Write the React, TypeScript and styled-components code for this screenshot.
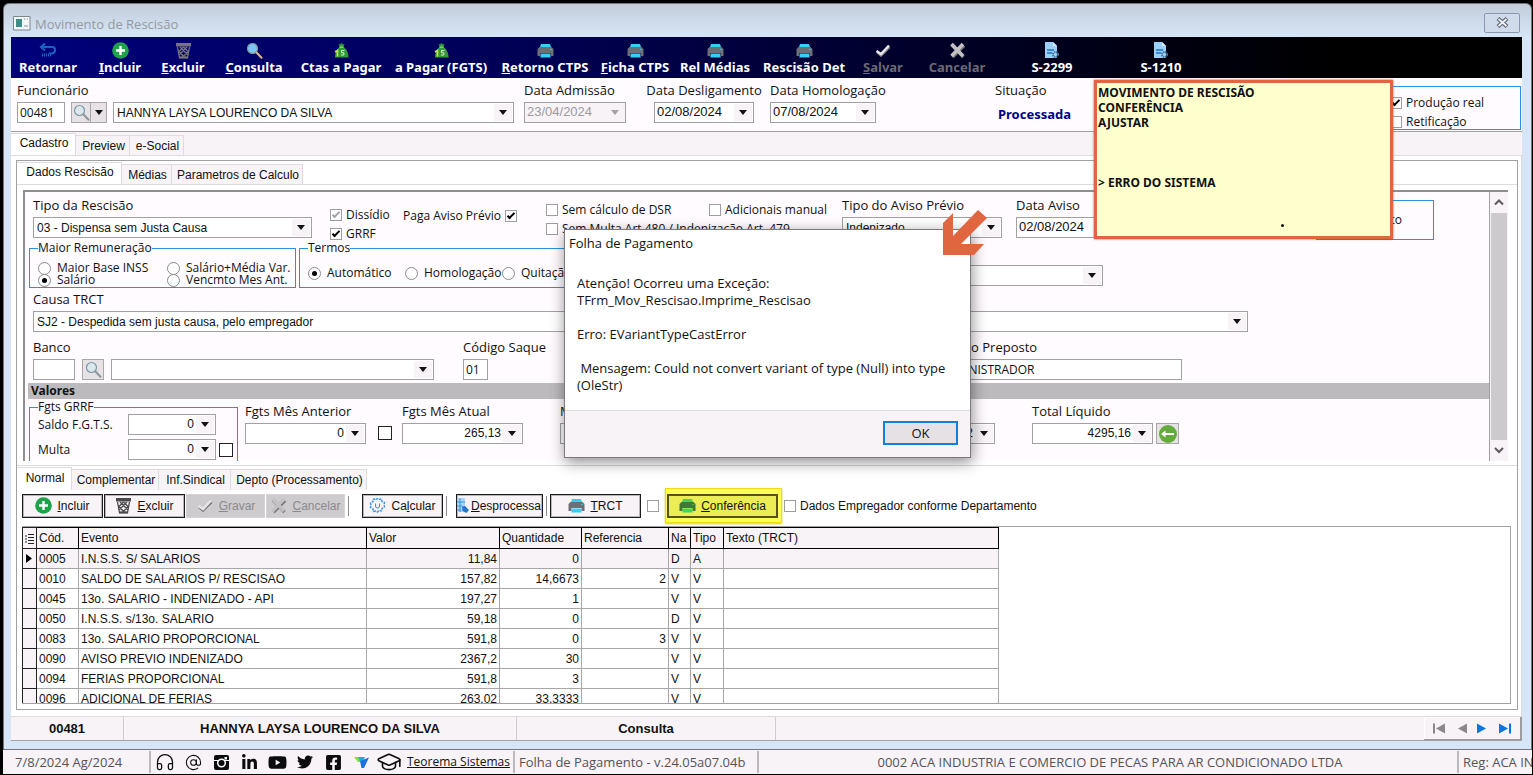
import React from "react";
import styled, { createGlobalStyle, css } from "styled-components";
import { FaTwitter, FaLinkedinIn, FaYoutube, FaFacebookSquare } from "react-icons/fa";
import { AtSign, GraduationCap, Headphones } from "lucide-react";

const ui = `"Open Sans", "Noto Sans", sans-serif`;
const bold = `"Noto Sans", "Open Sans", sans-serif`;
const sys = `"Liberation Sans", Arial, sans-serif`;

const c = {
  face: "#f7f3f7",
  panel: "#fffbff",
  line: "#a3a0a3",
  soft: "#dedbde",
  blue: "#2a90e4",
  frame: "#d6e6f6",
};

const Global = createGlobalStyle`
  *, *::before, *::after { box-sizing: border-box; }
  body { margin: 0; background: #000; color: #111; font: 12px/16px ${sys}; overflow: hidden; }
  button, input, select { font: inherit; color: inherit; margin: 0; padding: 0; border-radius: 0; }
  button { cursor: pointer; }
  svg { display: block; flex: none; }
`;

/* ---------- shell ---------- */
const Desktop = styled.div`
  display: flex;
  flex-direction: column;
  height: 100vh;
  padding: 3px 1px 1px 3px;
  background: #000;
`;
const Frame = styled.main`
  flex: 1;
  min-height: 0;
  display: flex;
  flex-direction: column;
  padding: 0 9px 8px 7px;
  border: 1px solid #77757b;
  border-radius: 6px 6px 0 0;
  background: linear-gradient(#c3cddb, ${c.frame} 33px);
`;
const TitleBar = styled.header`
  flex: none;
  display: flex;
  align-items: center;
  gap: 4px;
  height: 33px;
  padding: 6px 2px 0;
  color: #949aa2;
  font: 13px/18px ${ui};
`;
const CloseButton = styled.button`
  display: grid;
  place-items: center;
  width: 36px;
  height: 20px;
  margin: 0 0 2px auto;
  border: 1px solid #8b97b3;
  border-radius: 2px;
  background: #cfdaea;
`;
const Client = styled.div`
  flex: 1;
  min-height: 0;
  display: flex;
  flex-direction: column;
  background: ${c.face};
`;
const ToolBar = styled.nav`
  flex: none;
  display: grid;
  grid-template-columns: 74px 70px 56px 86px 88px 112px 96px 84px 76px 102px 56px 92px 98px 120px;
  height: 41px;
  background: linear-gradient(90deg, #00007b, #00005a 30%, #000032 55%, #000012 75%, #000 88%);
`;
const ToolButton = styled.button`
  display: flex;
  flex-direction: column;
  align-items: center;
  padding-top: 5px;
  border: 0;
  background: none;
  color: #fff;
  font: bold 13px/16px ${bold};
  white-space: nowrap;
  &:disabled { color: #6c6a70; }
`;

/* ---------- fields ---------- */
const FieldBox = styled.div<{ $w?: number; $center?: boolean }>`
  flex: none;
  display: flex;
  flex-direction: column;
  gap: 4px;
  width: ${(p) => (p.$w ? `${p.$w}px` : "auto")};
  align-items: ${(p) => (p.$center ? "center" : "flex-start")};
`;
const Label = styled.label`
  height: 16px;
  font: 13px/16px ${ui};
  white-space: nowrap;
`;
const FieldPair = styled.div<{ $gap: number }>`
  display: flex;
  align-items: flex-start;
  gap: ${(p) => p.$gap}px;
`;
const Controls = styled.div<{ $gap?: number }>`
  display: flex;
  align-items: center;
  gap: ${(p) => p.$gap ?? 6}px;
`;
const box = css`
  height: 21px;
  border: 1px solid ${c.line};
  background: #fff;
`;
const TextInput = styled.input<{ $w: number }>`
  ${box}
  width: ${(p) => p.$w}px;
  padding: 0 2px;
  outline: 0;
  font: 12px/16px ${ui};
`;
const Picker = styled.div<{ $w: number; $off?: boolean }>`
  ${box}
  flex: none;
  display: flex;
  width: ${(p) => p.$w}px;
  padding: 1px;
  background: ${(p) => (p.$off ? c.face : "#fff")};
  color: ${(p) => (p.$off ? "#9d9a9d" : "#111")};
`;
const PickerInput = styled.input<{ $right?: boolean }>`
  flex: 1;
  min-width: 0;
  border: 0;
  padding: 0 2px 1px 1px;
  outline: 0;
  background: none;
  text-align: ${(p) => (p.$right ? "right" : "left")};
  font: ${(p) => (p.$right ? 12 : 13)}px/16px ${sys};
`;
const CaretButton = styled.button`
  display: grid;
  place-items: center;
  width: 18px;
  border: 0;
  background: ${c.face};
`;
const SelectBox = styled.div<{ $w: number }>`
  ${box}
  flex: none;
  display: grid;
  grid-template-columns: 1fr 18px;
  align-items: stretch;
  width: ${(p) => p.$w}px;
  padding: 1px;
  & > select {
    grid-area: 1 / 1 / 2 / 3;
    min-width: 0;
    padding: 0 20px 0 2px;
    border: 0;
    outline: 0;
    appearance: none;
    background: none;
  }
  & > span {
    grid-area: 1 / 2;
    display: grid;
    place-items: center;
    background: ${c.face};
    pointer-events: none;
  }
`;
const IconButton = styled.button<{ $w?: number }>`
  display: flex;
  align-items: center;
  justify-content: center;
  width: ${(p) => p.$w ?? 22}px;
  height: 21px;
  border: 1px solid #aaa7aa;
  background: #e6e2e6;
`;
const SearchSplit = styled.div`
  display: flex;
  & > button + button { border-left-width: 0; }
`;
const Check = styled.label`
  flex: none;
  display: inline-flex;
  align-items: center;
  gap: 4px;
  height: 18px;
  white-space: nowrap;
  font: 12px/16px ${ui};
`;
const RadioLabel = styled(Check)<{ $tight?: boolean }>`
  gap: 6px;
  height: ${(p) => (p.$tight ? 12 : 18)}px;
  line-height: 12px;
`;
const SysText = styled.span`
  font: 12px/16px ${sys};
`;
const CheckInput = styled.input<{ $dark?: boolean; $gray?: boolean }>`
  flex: none;
  appearance: none;
  display: grid;
  place-items: center;
  width: ${(p) => (p.$dark ? 14 : 12)}px;
  height: ${(p) => (p.$dark ? 14 : 12)}px;
  border: 1px solid ${(p) => (p.$dark ? "#222" : "#a09da0")};
  background: #fff;
  &:checked::before {
    content: "";
    width: 8px;
    height: 4px;
    margin-bottom: 2px;
    border: solid ${(p) => (p.$gray ? "#a5a2a5" : "#000")};
    border-width: 0 0 2px 2px;
    rotate: -45deg;
  }
`;
const Radio = styled.input`
  flex: none;
  appearance: none;
  display: grid;
  place-items: center;
  width: 13px;
  height: 13px;
  border: 1px solid #8d8a8d;
  border-radius: 50%;
  background: #fff;
  &:checked::before { content: ""; width: 5px; height: 5px; border-radius: 50%; background: #000; }
`;
const Group = styled.fieldset<{ $w: number; $open?: boolean }>`
  flex: none;
  width: ${(p) => p.$w}px;
  min-width: 0;
  margin: 0;
  padding: 0 0 0 8px;
  border: 1px solid ${c.blue};
  border-bottom-width: ${(p) => (p.$open ? 0 : 1)}px;
  & > legend { height: 14px; padding: 0; font: 12px/14px ${ui}; }
`;

/* ---------- header panel ---------- */
const HeaderPanel = styled.section`
  flex: none;
  display: flex;
  align-items: flex-start;
  gap: 20px;
  height: 54px;
  padding: 4px 1px 0 6px;
  border-bottom: 1px solid ${c.line};
  background: ${c.panel};
`;
const Situation = styled(FieldBox)`
  margin-left: 89px;
  & > output { color: #000085; font: bold 13px/21px ${bold}; padding: 2px 3px; }
`;
const RealBox = styled.div`
  display: flex;
  flex-direction: column;
  align-items: flex-end;
  width: 300px;
  height: 44px;
  margin: 4px 0 0 auto;
  padding: 6px 36px 0 0;
  border: 1px solid ${c.blue};
  & > label { width: 94px; height: 19px; }
`;

/* ---------- tabs ---------- */
const Tabs = styled.div<{ $h: number; $bg?: string }>`
  flex: none;
  display: flex;
  align-items: flex-end;
  height: ${(p) => p.$h}px;
  background: ${(p) => p.$bg ?? "#fff"};
`;
const Tab = styled.button<{ $w: number; $on?: boolean }>`
  width: ${(p) => p.$w}px;
  height: ${(p) => (p.$on ? "calc(100% - 1px)" : "calc(100% - 3px)")};
  padding-left: 2px;
  padding-bottom: ${(p) => (p.$on ? 3 : 0)}px;
  border: solid ${c.soft};
  border-width: 1px 1px 0 0;
  background: ${(p) => (p.$on ? "#fff" : c.face)};
  white-space: nowrap;
`;
const OuterPage = styled.section`
  flex: 1;
  min-height: 0;
  display: flex;
  padding: 4px 3px 6px 5px;
  border: solid ${c.soft};
  border-width: 1px 1px 0 0;
  background: #fff;
`;
const InnerPage = styled.div`
  flex: 1;
  min-width: 0;
  display: flex;
  flex-direction: column;
  border: 1px solid ${c.line};
  background: #fff;
`;
const DataPage = styled.div`
  flex: none;
  padding: 5px 9px 4px 6px;
  border: solid ${c.soft};
  border-width: 1px 0;
`;
const ScrollPanel = styled.div`
  display: flex;
  height: 271px;
  border: solid #918e91;
  border-width: 2px 0 0 2px;
  background: ${c.panel};
`;
const Form = styled.form`
  flex: 1;
  min-width: 0;
  display: flex;
  flex-direction: column;
  overflow: hidden;
  padding-left: 3px;
`;
const ScrollBar = styled.div`
  display: flex;
  flex-direction: column;
  width: 19px;
  border-left: 1px solid ${c.line};
  background: ${c.face};
  & > i { flex: 1; margin: 0 1px; background: #cdcacd; }
`;
const ScrollArrow = styled.button`
  display: grid;
  place-items: center;
  height: 21px;
  border: 0;
  background: none;
`;
const FormRow = styled.div<{ $h: number; $left?: number; $top?: number; $gap?: number }>`
  flex: none;
  display: flex;
  align-items: flex-start;
  gap: ${(p) => p.$gap ?? 0}px;
  height: ${(p) => p.$h}px;
  padding: ${(p) => p.$top ?? 0}px 0 0 ${(p) => p.$left ?? 5}px;
`;
const Stack = styled.div<{ $w: number; $top?: number }>`
  flex: none;
  display: flex;
  flex-direction: column;
  gap: 1px;
  width: ${(p) => p.$w}px;
  padding-top: ${(p) => p.$top ?? 0}px;
`;
const MomentBox = styled.div`
  width: 118px;
  height: 40px;
  margin-left: 201px;
  margin-top: 3px;
  padding: 11px 31px 0 0;
  border: 1px solid ${c.blue};
  text-align: right;
  font: 12px/16px ${ui};
`;
const RadioGrid = styled.div`
  display: grid;
  grid-template-columns: 129px auto;
  padding: 7px 0 1px;
`;
const RadioLine = styled.div`
  display: grid;
  grid-template-columns: 97px 97px auto;
  padding: 9px 0 5px;
`;
const SectionBar = styled.h2`
  flex: none;
  height: 16px;
  margin: 0;
  padding-left: 3px;
  background: #bdbabd;
  font: bold 12px/16px ${bold};
`;
const GrrfGrid = styled.div`
  display: grid;
  grid-template-columns: 87px 88px 14px;
  gap: 4px 3px;
  align-items: center;
  padding-bottom: 2px;
  font: 12px/16px ${ui};
`;
const CheckSlot = styled.div`
  padding: 23px 10px 0 12px;
`;
const WideGap = styled.span`
  width: 193px;
`;

/* ---------- lower page ---------- */
const ActionBar = styled.div`
  flex: none;
  display: flex;
  align-items: center;
  gap: 1px;
  height: 36px;
  padding: 0 0 5px 5px;
`;
const Action = styled.button<{ $w: number; $tight?: boolean }>`
  flex: none;
  display: flex;
  align-items: center;
  justify-content: ${(p) => (p.$tight ? "flex-start" : "center")};
  gap: ${(p) => (p.$tight ? 2 : 5)}px;
  width: ${(p) => p.$w}px;
  height: 24px;
  overflow: hidden;
  border: 1px solid #1c1a1c;
  box-shadow: inset 0 0 0 1px #b9b6b9;
  background: ${c.face};
  white-space: nowrap;
  &:disabled { border-color: #d6d3d6; box-shadow: none; background: #cecbce; color: #8d8a8d; }
`;
const Sep = styled.span<{ $after: number }>`
  width: 1px;
  height: 20px;
  margin: 0 ${(p) => p.$after}px 0 2px;
  background: #8d8a8d;
`;
const PrintOptions = styled.div`
  display: flex;
  align-items: center;
  gap: 6px;
  padding: 0 1px 0 5px;
`;
const Marker = styled.div`
  display: flex;
  align-items: center;
  height: 35px;
  padding: 0 3px 0 1px;
  border: 1px solid #f5d816;
  background: #ffff55;
  box-shadow: 0 1px 2px #d8c84a;
  & > button { background: #ecec55; border: 2px solid #55521c; box-shadow: none; }
`;
const GridArea = styled.div`
  flex: 1;
  min-height: 0;
  overflow: hidden;
  margin: 0 6px 5px 5px;
  border: solid ${c.line};
  border-width: 1px 1px 1px 0;
  background: #fff;
`;
const Grid = styled.table`
  width: 976px;
  table-layout: fixed;
  border-collapse: collapse;
  th, td { height: 20px; padding: 0 2px; border: 1px solid #a9a6a9; line-height: 16px; overflow: hidden; white-space: nowrap; }
  th { height: 21px; border-color: #000; background: ${c.face}; text-align: left; font-weight: normal; }
  th:first-child, td:first-child { padding: 0 0 0 2px; border-color: #222; background: ${c.face}; }
`;
const Row = styled.tr<{ $on?: boolean }>`
  background: ${(p) => (p.$on ? c.face : "#fff")};
`;
const Cell = styled.td<{ $num?: boolean }>`
  text-align: ${(p) => (p.$num ? "right" : "left")};
`;
const RecordBar = styled.footer`
  flex: none;
  display: grid;
  grid-template-columns: 113px 393px 259px 1fr 98px;
  height: 25px;
  border: solid ${c.line};
  border-width: 1px 0;
  border-top-color: ${c.soft};
  & > output { border-right: 1px solid #cfcccf; text-align: center; font: bold 13px/23px ${sys}; }
`;
const Navigator = styled.div`
  display: flex;
  justify-content: space-between;
  align-items: center;
  padding: 0 9px;
  border: solid #9e9b9e;
  border-width: 0 2px 1px 0;
  box-shadow: inset 1px 1px #fff;
  & > button { border: 0; background: none; }
`;

/* ---------- application status bar ---------- */
const AppBar = styled.footer`
  flex: none;
  display: flex;
  align-items: center;
  height: 24px;
  overflow: hidden;
  background: ${c.face};
  color: #555258;
  font: 13px/22px ${ui};
  white-space: nowrap;
`;
const AppCell = styled.div<{ $w?: number; $mid?: boolean; $flush?: boolean }>`
  flex: ${(p) => (p.$w ? `0 0 ${p.$w}px` : 1)};
  min-width: 0;
  display: flex;
  align-items: center;
  justify-content: ${(p) => (p.$mid ? "center" : "flex-start")};
  height: 22px;
  padding-left: ${(p) => (p.$flush ? 0 : 4)}px;
  border-right: 2px solid #bdbabd;
  &:first-child { padding-left: 12px; }
  &:last-child { border: 0; overflow: hidden; }
`;
const Social = styled.a`
  flex: none;
  display: grid;
  place-items: center;
  width: 28px;
  color: #0c0b0d;
`;
const BrandLink = styled.a`
  margin-left: 4px;
  color: #111;
  font: 12px/18px ${ui};
`;

/* ---------- overlays ---------- */
const Dialog = styled.section`
  position: absolute;
  left: 564px;
  top: 229px;
  width: 407px;
  border: 1px solid #7c797d;
  background: #fff;
  box-shadow: 1px 4px 14px rgba(0, 0, 0, 0.45);
  & > h1 { margin: 0; padding: 4px 4px 0; font: 13px/18px ${ui}; }
  & > p { margin: 0; height: 158px; padding: 23px 12px 0; font: 13px/17px ${ui}; white-space: pre-line; }
  & > footer { display: flex; justify-content: flex-end; height: 47px; padding: 10px 12px; border-top: 1px solid ${c.soft}; background: ${c.face}; }
`;
const OkButton = styled.button`
  width: 75px;
  height: 24px;
  border: 2px solid #1080dc;
  background: #e5e1e5;
  font: 13px/16px ${ui};
`;
const Note = styled.aside`
  position: absolute;
  left: 1094px;
  top: 80px;
  width: 299px;
  height: 159px;
  padding: 2px 1px;
  border: 3px solid #e06640;
  background: #ffffce;
  box-shadow: 0 0 2px #a04a30;
  font: bold 12px/15px ${bold};
  white-space: pre-line;
`;
const Speck = styled.i`
  position: absolute;
  left: 184px;
  top: 141px;
  width: 3px;
  height: 3px;
  border-radius: 50%;
  background: #111;
`;
const Arrow = styled.svg`
  position: absolute;
  left: 942px;
  top: 209px;
`;

/* ---------- drawings ---------- */
const Caret = ({ color = "#111" }: { color?: string }) => (
  <svg width="8" height="5" viewBox="0 0 8 5"><path d="M0 0h8L4 5z" fill={color} /></svg>
);
const PlusIcon = ({ size = 17 }: { size?: number }) => (
  <svg width={size} height={size} viewBox="0 0 17 17">
    <circle cx="8.500" cy="8.500" r="8.300" fill="#1fa34a" />
    <path d="M8.500 4v9M4 8.500h9" stroke="#fff" strokeWidth="2.400" />
  </svg>
);
const ReturnIcon = () => (
  <svg width="18" height="17" viewBox="0 0 18 17" fill="none" stroke="#1764bd" strokeWidth="2">
    <path d="M6 1.500L2 5l4 3.500M2.500 5h11q2.500 0 2.500 3t-3 3.500H10" />
    <path d="M3 13h9" strokeWidth="3" strokeDasharray="1 1" />
  </svg>
);
const BinIcon = ({ color = "#77757a" }: { color?: string }) => (
  <svg width="17" height="17" viewBox="0 0 17 17" fill="none" stroke={color} strokeWidth="1.300">
    <path d="M1 1h15v3.500H1z" fill={color} stroke="none" />
    <path d="M2.500 5l2 10.500h8l2-10.500M5 5l7.500 7.500M12 5l-7.500 7.500M8.500 5L4 9.500l5 5.500M8.500 5L13 9.500 8 15" />
    <path d="M4 14.500h9v2H4z" fill={color} stroke="none" />
  </svg>
);
const LensIcon = ({ fill = "#7cc4f2", handle = "#d9b98c" }: { fill?: string; handle?: string }) => (
  <svg width="17" height="17" viewBox="0 0 17 17">
    <circle cx="6.500" cy="6.500" r="5" fill={fill} stroke="#7f98a4" strokeWidth="1.200" />
    <path d="M10.500 10.500l5 5.200" stroke={handle} strokeWidth="2" strokeLinecap="round" />
  </svg>
);
const MoneyIcon = () => (
  <svg width="15" height="17" viewBox="0 0 15 17">
    <path d="M4.500 2l1.500.5L7.500 1 9 2.500l1.500-.5L9.500 5C12.500 6.500 14.500 11 14.500 15.500H1C1 11 3 6.500 5.700 5z" fill="#2f9c3c" />
    <path d="M5.500 5.200h4" stroke="#b6e07a" />
    <path d="M1 10l2.500-1.500v6" stroke="#e8d839" strokeWidth="1.600" fill="none" />
    <path d="M10.500 8.500h-3v2.200h2.300v2.300H7" stroke="#d6f0c6" fill="none" />
  </svg>
);
const PrinterIcon = ({ body = "#6c7076", paper = "#38cdf2" }: { body?: string; paper?: string }) => (
  <svg width="17" height="17" viewBox="0 0 17 17">
    <path d="M4 2h9l1 3H3z" fill={paper} />
    <path d="M2.500 5h12l2 2v7h-3v-3h-10v3h-3V7z" fill={body} />
    <path d="M4 11.500h9l.7 4H3.300z" fill={paper} />
    <circle cx="14" cy="7.500" r=".8" fill={paper} />
  </svg>
);
const CheckIcon = () => (
  <svg width="18" height="17" viewBox="0 0 18 17" fill="none">
    <path d="M3 10l4 3.500L15.500 5" stroke="#7a787c" strokeWidth="2.500" />
    <path d="M2.500 9l4.500 3L15 3.500" stroke="#e8e5e8" strokeWidth="2.500" />
  </svg>
);
const CrossIcon = () => (
  <svg width="17" height="17" viewBox="0 0 17 17" fill="none" strokeWidth="3.500">
    <path d="M3 3l11.500 12M15 3.500L3.500 15" stroke="#77757a" />
    <path d="M2.500 2l11.500 12M14 2L2.500 14" stroke="#c4c1c4" />
  </svg>
);
const SheetIcon = () => (
  <svg width="16" height="17" viewBox="0 0 16 17">
    <path d="M1 0h8l4 4v12H1z" fill="#9bd0fa" />
    <path d="M9 0l4 4H9z" fill="#d9effe" />
    <path d="M3 8h7M3 11h5" stroke="#1c73c4" strokeWidth="1.500" />
    <circle cx="11.500" cy="12.500" r="2.500" fill="none" stroke="#47728f" strokeWidth="2" strokeDasharray="1.400 .6" />
  </svg>
);
const GearIcon = () => (
  <svg width="17" height="17" viewBox="0 0 17 17" fill="none" stroke="#2f96e4">
    <path d="M7 2.500l1.500-1 1.500 1 2.500-.5.5 2.500 2.500 1-.5 2.500.5 2-2.500 1.500-.5 2.500-2.500-.5-1.500 1.500L7 14l-2.500.5L4 12l-2.500-1.500L2 8 1.500 6 4 4.500 4.500 2z" strokeDasharray="2.500 1" strokeWidth="1.400" />
    <path d="M6.500 6.500v2.500a2 2 0 0 0 4 0V6.500" />
  </svg>
);
const SheetUndoIcon = () => (
  <svg width="12" height="17" viewBox="0 0 12 17">
    <path d="M0 1h8v8H6v6H0z" fill="#a9d5f7" />
    <path d="M0 5h8M0 9h5M0 13h4M3 1v14" stroke="#3c93da" />
    <path d="M5 9.500l3-.5 4 4-2.500 3-4-2z" fill="#2379c7" />
  </svg>
);
const BackIcon = () => (
  <svg width="18" height="18" viewBox="0 0 18 18">
    <circle cx="9" cy="9" r="9" fill="#63ac3c" />
    <path d="M2 9l4.500-3.500V8H15v2H6.500v2.500z" fill="#fff" />
  </svg>
);
const Chevron = ({ up }: { up?: boolean }) => (
  <svg width="10" height="7" viewBox="0 0 10 7" fill="none" stroke="#5c5a5c" strokeWidth="2">
    <path d={up ? "M1 5.500l4-4 4 4" : "M1 1l4 4 4-4"} />
  </svg>
);
const NavIcon = ({ back, end, color }: { back?: boolean; end?: boolean; color: string }) => (
  <svg width="13" height="11" viewBox="0 0 13 11" fill={color}>
    <path d={back ? "M12 0.500v10L3 5.500z" : "M1 0.500v10l9-5z"} />
    {end && <rect x={back ? 0 : 11} y="0.500" width="2" height="10" />}
  </svg>
);
const CameraIcon = () => (
  <svg width="17" height="17" viewBox="0 0 17 17" fill="none">
    <rect x="1" y="1" width="15" height="15" rx="2" fill="#0c0b0d" />
    <circle cx="8.500" cy="9" r="3.800" stroke="#fff" strokeWidth="1.500" />
    <rect x="11.500" y="3" width="2.500" height="2.500" fill="#fff" />
    <path d="M1 6.500h4M12 6.500h4" stroke="#fff" />
  </svg>
);
const BrandIcon = () => (
  <svg width="15" height="12" viewBox="0 0 15 12">
    <path d="M0 1h8L6.500 6H4z" fill="#8ae02a" />
    <path d="M4 1h7l-2 4H6z" fill="#16b4d8" />
    <path d="M6 5l9-3.500-5 10.500H7.500z" fill="#1c6fdc" />
  </svg>
);
const WindowIcon = () => (
  <svg width="18" height="15" viewBox="0 0 18 15">
    <path d="M.5.5h16.500v13.500H.5z" fill="#f4f6f8" stroke="#7d868f" />
    <path d="M3 3h6v8H3z" fill="#3c8f87" />
    <path d="M11 3h1.500M14 3h1M11 10h4" stroke="#8a9299" />
  </svg>
);
const CloseIcon = () => (
  <svg width="13" height="11" viewBox="0 0 13 11" fill="none">
    <path d="M2 1.500l9 8M11 1.500l-9 8" stroke="#5a616e" strokeWidth="4" />
    <path d="M2.500 2l8 7M10.500 2l-8 7" stroke="#eef1f6" strokeWidth="1.800" />
  </svg>
);

/* ---------- small pieces ---------- */
const Hot = ({ text }: { text: string }) => {
  const at = text.indexOf("&");
  if (at < 0) return <span>{text}</span>;
  return <span>{text.slice(0, at)}<u>{text[at + 1]}</u>{text.slice(at + 2)}</span>;
};
const Drop = ({ id, w, value, right, off, name }: { id?: string; w: number; value: string; right?: boolean; off?: boolean; name?: string }) => (
  <Picker $w={w} $off={off}>
    <PickerInput id={id} aria-label={name} defaultValue={value} $right={right} disabled={off} />
    <CaretButton type="button" aria-label="Abrir" disabled={off}><Caret color={off ? "#a5a2a5" : "#111"} /></CaretButton>
  </Picker>
);
const Choice = ({ id, w, value, name }: { id?: string; w: number; value: string; name?: string }) => (
  <SelectBox $w={w}>
    <select id={id} aria-label={name}><option>{value}</option></select>
    <span><Caret /></span>
  </SelectBox>
);
const Field = ({ id, label, w, center, children }: { id: string; label: string; w?: number; center?: boolean; children: React.ReactNode }) => (
  <FieldBox $w={w} $center={center}><Label htmlFor={id}>{label}</Label>{children}</FieldBox>
);
const Tick = ({ label, on, gray }: { label: string; on?: boolean; gray?: boolean }) => (
  <Check><CheckInput type="checkbox" defaultChecked={on} $gray={gray} />{label}</Check>
);
const Option = ({ group, label, on, tight }: { group: string; label: string; on?: boolean; tight?: boolean }) => (
  <RadioLabel $tight={tight}><Radio type="radio" name={group} defaultChecked={on} />{label}</RadioLabel>
);

const tools: [string, React.ReactNode, boolean?][] = [
  ["Retornar", <ReturnIcon />],
  ["&Incluir", <PlusIcon />],
  ["&Excluir", <BinIcon />],
  ["&Consulta", <LensIcon />],
  ["Ctas a Pagar", <MoneyIcon />],
  ["a Pagar (FGTS)", <MoneyIcon />],
  ["&Retorno CTPS", <PrinterIcon />],
  ["&Ficha CTPS", <PrinterIcon />],
  ["Rel Médias", <PrinterIcon />],
  ["Rescisão Det", <PrinterIcon />],
  ["&Salvar", <CheckIcon />, true],
  ["Cancelar", <CrossIcon />, true],
  ["S-2299", <SheetIcon />],
  ["S-1210", <SheetIcon />],
];

const events = [
  ["0005", "I.N.S.S. S/ SALARIOS", "11,84", "0", "", "D", "A"],
  ["0010", "SALDO DE SALARIOS P/ RESCISAO", "157,82", "14,6673", "2", "V", "V"],
  ["0045", "13o. SALARIO - INDENIZADO - API", "197,27", "1", "", "V", "V"],
  ["0050", "I.N.S.S. s/13o. SALARIO", "59,18", "0", "", "D", "V"],
  ["0083", "13o. SALARIO PROPORCIONAL", "591,8", "0", "3", "V", "V"],
  ["0090", "AVISO PREVIO INDENIZADO", "2367,2", "30", "", "V", "V"],
  ["0094", "FERIAS PROPORCIONAL", "591,8", "3", "", "V", "V"],
  ["0096", "ADICIONAL DE FERIAS", "263,02", "33,3333", "", "V", "V"],
];
const columns: [string, number][] = [
  ["Cód.", 42], ["Evento", 288], ["Valor", 133], ["Quantidade", 82],
  ["Referencia", 87], ["Na", 22], ["Tipo", 33], ["Texto (TRCT)", 275],
];

export default function App() {
  return (
    <>
      <Global />
      <Desktop>
        <Frame>
          <TitleBar>
            <WindowIcon />Movimento de Rescisão
            <CloseButton aria-label="Fechar"><CloseIcon /></CloseButton>
          </TitleBar>
          <Client>
            <ToolBar>
              {tools.map(([text, icon, off]) => (
                <ToolButton key={text} disabled={off}>{icon}<Hot text={text} /></ToolButton>
              ))}
            </ToolBar>

            <HeaderPanel>
              <FieldPair $gap={10}>
                <Field id="func" label="Funcionário" w={497}>
                  <Controls>
                    <TextInput id="func" $w={48} defaultValue="00481" />
                    <SearchSplit>
                      <IconButton $w={20} aria-label="Pesquisar"><LensIcon fill="#dbe7ec" handle="#8b989f" /></IconButton>
                      <IconButton $w={16} aria-label="Opções"><Caret /></IconButton>
                    </SearchSplit>
                    <Choice name="Nome" w={401} value="HANNYA LAYSA LOURENCO DA SILVA" />
                  </Controls>
                </Field>
                <Field id="adm" label="Data Admissão" w={102}><Drop id="adm" w={102} value="23/04/2024" off /></Field>
              </FieldPair>
              <FieldPair $gap={8}>
                <Field id="desl" label="Data Desligamento" w={116} center><Drop id="desl" w={100} value="02/08/2024" /></Field>
                <Field id="homo" label="Data Homologação" w={116}><Drop id="homo" w={106} value="07/08/2024" /></Field>
              </FieldPair>
              <Situation $w={90}><Label as="span">Situação</Label><output>Processada</output></Situation>
              <RealBox><Tick label="Produção real" on /><Tick label="Retificação" /></RealBox>
            </HeaderPanel>

            <Tabs $h={23} $bg={c.face}>
              <Tab $w={65} $on>Cadastro</Tab><Tab $w={54}>Preview</Tab><Tab $w={54}>e-Social</Tab>
            </Tabs>
            <OuterPage>
              <InnerPage>
                <Tabs $h={23}>
                  <Tab $w={105} $on>Dados Rescisão</Tab><Tab $w={50}>Médias</Tab><Tab $w={131}>Parametros de Calculo</Tab>
                </Tabs>
                <DataPage>
                  <ScrollPanel>
                    <Form>
                      <FormRow $h={49} $top={5}>
                        <Field id="tipo" label="Tipo da Rescisão" w={297}><Choice id="tipo" w={279} value="03 - Dispensa sem Justa Causa" /></Field>
                        <Stack $w={73} $top={9}><Tick label="Dissídio" on gray /><Tick label="GRRF" on /></Stack>
                        <Stack $w={143} $top={10}>
                          <Check>Paga Aviso Prévio<CheckInput type="checkbox" defaultChecked /></Check>
                        </Stack>
                        <Stack $w={163} $top={4}><Tick label="Sem cálculo de DSR" /><Tick label="Sem Multa Art.480 / Indenização Art. 479" /></Stack>
                        <Stack $w={133} $top={4}><Tick label="Adicionais manual" /></Stack>
                        <Field id="aviso" label="Tipo do Aviso Prévio" w={174}><Choice id="aviso" w={160} value="Indenizado" /></Field>
                        <Field id="dtaviso" label="Data Aviso" w={99}><Drop id="dtaviso" w={99} value="02/08/2024" /></Field>
                        <MomentBox>Momento</MomentBox>
                      </FormRow>
                      <FormRow $h={50} $left={1} $gap={3}>
                        <Group $w={267}>
                          <legend>Maior Remuneração</legend>
                          <RadioGrid>
                            <Option group="rem" label="Maior Base INSS" tight /><Option group="rem" label="Salário+Média Var." tight />
                            <Option group="rem" label="Salário" tight on /><Option group="rem" label="Vencmto Mes Ant." tight />
                          </RadioGrid>
                        </Group>
                        <Group $w={360}>
                          <legend>Termos</legend>
                          <RadioLine>
                            <Option group="ter" label="Automático" on /><Option group="ter" label="Homologação" /><Option group="ter" label="Quitação" />
                          </RadioLine>
                        </Group>
                        <Stack $w={441} $top={24}><Choice name="Complemento" w={441} value="" /></Stack>
                      </FormRow>
                      <FormRow $h={48}>
                        <Field id="causa" label="Causa TRCT"><Choice id="causa" w={1215} value="SJ2 - Despedida sem justa causa, pelo empregador" /></Field>
                      </FormRow>
                      <FormRow $h={44} $gap={30}>
                        <Field id="banco" label="Banco" w={400}>
                          <Controls $gap={7}>
                            <TextInput id="banco" $w={42} />
                            <IconButton type="button" aria-label="Pesquisar banco"><LensIcon fill="#dbe7ec" handle="#8b989f" /></IconButton>
                            <Choice name="Nome do banco" w={323} value="" />
                          </Controls>
                        </Field>
                        <Field id="saque" label="Código Saque" w={442}><TextInput id="saque" $w={25} defaultValue="01" /></Field>
                        <Field id="prep" label="Função Preposto"><TextInput id="prep" $w={247} defaultValue="ADMINISTRADOR" /></Field>
                      </FormRow>
                      <SectionBar>Valores</SectionBar>
                      <FormRow $h={62} $left={1} $top={1}>
                        <Group $w={209} $open>
                          <legend>Fgts GRRF</legend>
                          <GrrfGrid>
                            <label htmlFor="saldo">Saldo F.G.T.S.</label><Drop id="saldo" w={88} value="0" right /><span />
                            <label htmlFor="multa">Multa</label><Drop id="multa" w={88} value="0" right />
                            <CheckInput type="checkbox" aria-label="Multa manual" $dark />
                          </GrrfGrid>
                        </Group>
                        <FormRow $h={60} $left={7} $top={3}>
                          <Field id="ant" label="Fgts Mês Anterior" w={121}><Drop id="ant" w={121} value="0" right /></Field>
                          <CheckSlot><CheckInput type="checkbox" aria-label="Incluir mês anterior" $dark /></CheckSlot>
                          <Field id="atu" label="Fgts Mês Atual" w={158}><Drop id="atu" w={121} value="265,13" right /></Field>
                          <Field id="med" label="Médias" w={121}><Drop id="med" w={121} value="" right /></Field>
                          <WideGap />
                          <Field id="desc" label="Descontos" w={158}><Drop id="desc" w={121} value="2" right /></Field>
                          <Field id="liq" label="Total Líquido">
                            <Controls $gap={3}>
                              <Drop id="liq" w={121} value="4295,16" right />
                              <IconButton type="button" $w={23} aria-label="Recalcular"><BackIcon /></IconButton>
                            </Controls>
                          </Field>
                        </FormRow>
                      </FormRow>
                    </Form>
                    <ScrollBar>
                      <ScrollArrow aria-label="Subir"><Chevron up /></ScrollArrow>
                      <i />
                      <ScrollArrow aria-label="Descer"><Chevron /></ScrollArrow>
                    </ScrollBar>
                  </ScrollPanel>
                </DataPage>

                <Tabs $h={24}>
                  <Tab $w={55} $on>Normal</Tab><Tab $w={87}>Complementar</Tab><Tab $w={72}>Inf.Sindical</Tab><Tab $w={136}>Depto (Processamento)</Tab>
                </Tabs>
                <ActionBar>
                  <Action $w={81}><PlusIcon /><Hot text="&Incluir" /></Action>
                  <Action $w={81}><BinIcon color="#4b494c" /><Hot text="&Excluir" /></Action>
                  <Action $w={79} disabled><CheckIcon /><Hot text="&Gravar" /></Action>
                  <Action $w={79} disabled><CrossIcon /><Hot text="&Cancelar" /></Action>
                  <Sep $after={12} />
                  <Action $w={81}><GearIcon /><Hot text="Ca&lcular" /></Action>
                  <Sep $after={8} />
                  <Action $w={87} $tight><SheetUndoIcon /><Hot text="&Desprocessa" /></Action>
                  <Sep $after={2} />
                  <Action $w={91}><PrinterIcon /><Hot text="&TRCT" /></Action>
                  <PrintOptions>
                    <CheckInput type="checkbox" aria-label="TRCT completo" />
                    <Marker><Action $w={111}><PrinterIcon body="#3d7a34" paper="#3fd94f" /><Hot text="&Conferência" /></Action></Marker>
                  </PrintOptions>
                  <Check><CheckInput type="checkbox" /><SysText>Dados Empregador conforme Departamento</SysText></Check>
                </ActionBar>
                <GridArea>
                  <Grid>
                    <colgroup><col width={14} />{columns.map(([n, w]) => <col key={n} width={w} />)}</colgroup>
                    <thead>
                      <tr>
                        <th aria-label="Linha"><svg width="9" height="11" viewBox="0 0 9 11"><path d="M3 1.500h6M3 4.500h6M3 7.500h6M3 10.500h6M0 3h2M0 6h2M0 9h2" stroke="#222" /></svg></th>
                        {columns.map(([n]) => <th key={n}>{n}</th>)}
                      </tr>
                    </thead>
                    <tbody>
                      {events.map((r, i) => (
                        <Row key={r[0]} $on={i === 0}>
                          <Cell>{i === 0 && <svg width="7" height="9" viewBox="0 0 7 9"><path d="M1 0v9l6-4.500z" /></svg>}</Cell>
                          {r.map((v, k) => <Cell key={k} $num={k > 1 && k < 5}>{v}</Cell>)}
                          <Cell />
                        </Row>
                      ))}
                    </tbody>
                  </Grid>
                </GridArea>
              </InnerPage>
            </OuterPage>
            <RecordBar>
              <output>00481</output><output>HANNYA LAYSA LOURENCO DA SILVA</output><output>Consulta</output><span />
              <Navigator>
                <button aria-label="Primeiro"><NavIcon back end color="#8b898c" /></button>
                <button aria-label="Anterior"><NavIcon back color="#8b898c" /></button>
                <button aria-label="Próximo"><NavIcon color="#0d74e0" /></button>
                <button aria-label="Último"><NavIcon end color="#0d74e0" /></button>
              </Navigator>
            </RecordBar>
          </Client>
        </Frame>

        <AppBar>
          <AppCell $w={148}>7/8/2024 Ag/2024</AppCell>
          <AppCell $w={364} $flush>
            <Social href="#" aria-label="Suporte"><Headphones size={20} strokeWidth={1.5} /></Social>
            <Social href="#" aria-label="E-mail"><AtSign size={17} strokeWidth={1.5} /></Social>
            <Social href="#" aria-label="Instagram"><CameraIcon /></Social>
            <Social href="#" aria-label="LinkedIn"><FaLinkedinIn size={17} /></Social>
            <Social href="#" aria-label="YouTube"><FaYoutube size={19} /></Social>
            <Social href="#" aria-label="Twitter"><FaTwitter size={16} /></Social>
            <Social href="#" aria-label="Facebook"><FaFacebookSquare size={17} /></Social>
            <Social href="#" aria-label="Portal"><BrandIcon /></Social>
            <Social href="#" aria-label="Cursos"><GraduationCap size={26} strokeWidth={1.5} /></Social>
            <BrandLink href="#">Teorema Sistemas</BrandLink>
          </AppCell>
          <AppCell $w={244}>Folha de Pagamento - v.24.05a07.04b</AppCell>
          <AppCell $mid>0002 ACA INDUSTRIA E COMERCIO DE PECAS PARA AR CONDICIONADO LTDA</AppCell>
          <AppCell $w={73}>Reg: ACA IN</AppCell>
        </AppBar>
      </Desktop>

      <Dialog role="alertdialog" aria-label="Folha de Pagamento">
        <h1>Folha de Pagamento</h1>
        <p>
          {"Atenção! Ocorreu uma Exceção:\nTFrm_Mov_Rescisao.Imprime_Rescisao\n\nErro: EVariantTypeCastError\n\n\u00a0Mensagem: Could not convert variant of type (Null) into type (OleStr)"}
        </p>
        <footer><OkButton>OK</OkButton></footer>
      </Dialog>
      <Note>
        {"MOVIMENTO DE RESCISÃO\nCONFERÊNCIA\nAJUSTAR\n\n\n\n> ERRO DO SISTEMA"}
        <Speck />
      </Note>
      <Arrow width="46" height="48" viewBox="0 0 46 48">
        <path d="M1 14L11 4v23L36 1l9 8-26 26h23L32 46H1z" fill="#e06640" />
      </Arrow>
    </>
  );
}
